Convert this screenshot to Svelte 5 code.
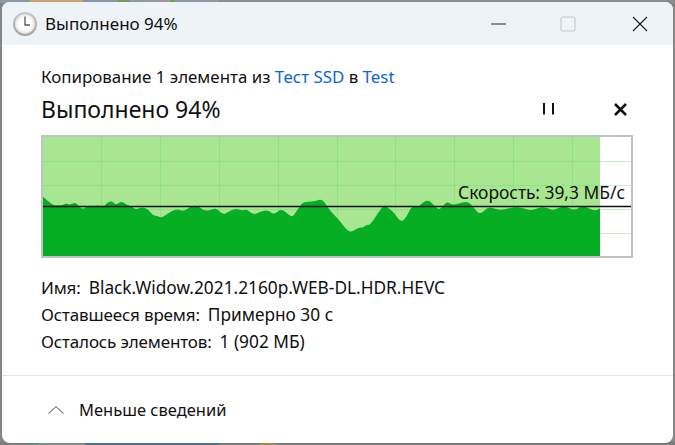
<script>
	// page coordinates read off the screenshot, shifted into the plot below
	const raw = [
		[43,196.7],[46.7,200],[50,202.3],[53,205],[58,205.3],[63.3,205],[66,203],[69.3,205],[75,202.3],[79.3,206],[82.7,209.3],[86.7,206.7],[90,205.3],[93.3,206.7],[98,205],[103,207.3],[106,204],[110,201],[113,202],[116,205],[121.7,201],[126.7,205],[130,205.3],[136.7,210],[141.7,206.7],[148.3,209.3],[152.7,215.3],[158.3,216],[161,218],[166.7,214.3],[176.7,208.3],[183.3,211.7],[190,206.7],[196.7,205.3],[205,211.3],[213.3,209],[216.7,208.3],[223.3,215],[230,210.7],[236.7,208.3],[241.7,210.7],[246.7,209.3],[254,215],[260,211.7],[268.3,210],[274,215],[281.7,208],[291.7,218],[296,212],[301.7,203.3],[305,202],[311.7,201.7],[316,201],[320.7,199],[325,202.7],[330,210.7],[340,220.7],[345,228.3],[351,232.7],[358.3,227.3],[363.3,227.7],[366,225],[370,225],[376.7,215],[384,204.3],[388,208],[393.3,211.7],[401,222.7],[406.7,216.7],[411.7,205.7],[418.3,207.3],[423,202],[428.3,200],[433,204],[439.3,211],[446.7,201],[451.7,205],[458.3,203.7],[468.3,201],[474,208],[480,215],[488.3,206.7],[495,209],[501.7,210],[510,208],[520,206.7],[530,211],[538,208],[545,206.7],[553.3,211],[563.3,205],[575,211],[581.7,205],[588,208],[595,211],[600,208.3]
	];
	const originX = 43;
	const originY = 137;
	const plotW = 588;
	const plotH = 119;
	const doneX = 600 - originX;

	const pts = raw.map(([x, y]) => [x - originX, y - originY]);

	// curve through the midpoints so the peaks come out soft
	function smooth(points) {
		let d = `M0,${plotH}L${points[0][0]},${points[0][1]}`;
		for (let i = 1; i < points.length - 1; i++) {
			const [x, y] = points[i];
			const mx = (x + points[i + 1][0]) / 2;
			const my = (y + points[i + 1][1]) / 2;
			d += `Q${x},${y} ${mx.toFixed(1)},${my.toFixed(1)}`;
		}
		const last = points[points.length - 1];
		return d + `L${last[0]},${last[1]}L${doneX},${plotH}Z`;
	}

	const area = smooth(pts);

	const columns = [101.5, 160.5, 219.5, 278.5, 337.5, 395.5, 454.5, 513.5, 572.5].map((x) => x - originX);
	const rows = [161.5, 185.5, 209.5, 233.5].map((y) => y - originY);
	const speedY = 206.5 - originY;

	const details = [
		{ label: 'Имя:', value: 'Black.Widow.2021.2160p.WEB-DL.HDR.HEVC' },
		{ label: 'Оставшееся время:', value: 'Примерно 30 с' },
		{ label: 'Осталось элементов:', value: '1 (902 МБ)' }
	];
</script>

<div class="desktop">
	<div class="window">
		<header class="titlebar">
			<svg class="clock" width="26" height="26" viewBox="0 0 26 26">
				<defs>
					<linearGradient id="rim" x1="0" y1="0" x2="0" y2="1">
						<stop offset="0" stop-color="#c9c9c9" />
						<stop offset="1" stop-color="#a2a2a2" />
					</linearGradient>
					<radialGradient id="face">
						<stop offset="0.6" stop-color="#ffffff" />
						<stop offset="1" stop-color="#e4e4e4" />
					</radialGradient>
				</defs>
				<circle cx="13" cy="13" r="12" fill="url(#rim)" />
				<circle cx="13" cy="13" r="10" fill="url(#face)" />
				<path d="M13 5.5V14H18" fill="none" stroke="#555" stroke-width="1.3" />
			</svg>
			<span class="title">Выполнено 94%</span>
			<div class="controls">
				<svg class="min" width="16" height="2" viewBox="0 0 16 2"><path d="M0 1H15" stroke="#222" stroke-width="1" /></svg>
				<svg class="max" width="16" height="16" viewBox="0 0 16 16"><rect x="1" y="1" width="14" height="14" rx="2" fill="none" stroke="#c8cbce" stroke-width="1.2" /></svg>
				<svg class="close" width="16" height="16" viewBox="0 0 16 16"><path d="M1 1L15 15M15 1L1 15" stroke="#222" stroke-width="1.2" /></svg>
			</div>
		</header>

		<main class="body">
			<p class="copying">Копирование 1 элемента из <a href="#src">Тест SSD</a> в <a href="#dst">Test</a></p>
			<div class="status">
				<h1>Выполнено 94%</h1>
				<div class="actions">
					<svg width="11" height="12" viewBox="0 0 11 12"><path d="M1 0V11.500M10 0V11.500" stroke="#111" stroke-width="2" /></svg>
					<svg width="13" height="13" viewBox="0 0 13 13"><path d="M1 1L12 12M12 1L1 12" stroke="#111" stroke-width="2.500" /></svg>
				</div>
			</div>

			<div class="chart">
				<svg width={plotW} height={plotH} viewBox="0 0 {plotW} {plotH}">
					{#each rows as y}
						<line x1="0" x2={plotW} y1={y} y2={y} stroke="#cdeecd" />
					{/each}
					<rect width={doneX} height={plotH} fill="#a9e692" />
					{#each rows as y}
						<line x1="0" x2={doneX} y1={y} y2={y} stroke="#90e084" />
					{/each}
					{#each columns as x}
						<line x1={x} x2={x} y1="0" y2={plotH} stroke="#90e084" />
					{/each}
					<path d={area} fill="#06ae26" />
					<line x1="0" x2={plotW} y1={speedY} y2={speedY} stroke="#111" stroke-width="1.300" />
				</svg>
				<span class="speed">Скорость: 39,3 МБ/с</span>
			</div>

			<dl class="details">
				{#each details as d}
					<div class="row">
						<dt>{d.label}</dt>
						<dd>{d.value}</dd>
					</div>
				{/each}
			</dl>
		</main>

		<footer class="footer">
			<svg width="16" height="8" viewBox="0 0 16 8"><path d="M0.500 7.500L8 0.700L15.500 7.500" fill="none" stroke="#7f7f7f" stroke-width="1.100" /></svg>
			<span>Меньше сведений</span>
		</footer>
	</div>
</div>

<style>
	:global(body) {
		margin: 0;
		background: #858585;
	}

	.desktop {
		width: 675px;
		height: 445px;
		box-sizing: border-box;
		padding: 2px 2px 2px 2px;
		background:
			linear-gradient(90deg, #8d9aa6 0 30px, #c4a56e 30px 83px, #8a97a3 83px 117px, #6f9f60 117px 130px, #8d9aa6 130px 143px, #999 143px 170px, #6f9f60 170px 175px, #8d9aa6 175px 219px, #8c8c8c 219px) top / 100% 3px no-repeat,
			linear-gradient(90deg, #7d7d7d 0 28px, #5f8f78 28px 38px, #808d8c 38px 85px, #4f6f8a 85px 219px, #7a7a7a 219px 260px, #a08a50 260px 276px, #7a7a7a 276px) bottom / 100% 3px no-repeat,
			#858585;
		font-family: 'Noto Sans', 'Segoe UI', sans-serif;
		color: #111;
	}

	.window {
		height: 100%;
		display: flex;
		flex-direction: column;
		background: #fff;
		border-radius: 8px;
		overflow: hidden;
	}

	.titlebar {
		flex: 0 0 43px;
		display: flex;
		align-items: center;
		padding-left: 10px;
		background: #eef3f8;
	}

	.clock {
		margin-right: 7px;
	}

	.title {
		font-size: 17px;
	}

	.controls {
		margin-left: auto;
		display: flex;
		align-items: center;
		padding-right: 25px;
	}

	.controls .max {
		margin-left: 53px;
	}

	.controls .close {
		margin-left: 56px;
	}

	.body {
		flex: 1;
		padding: 0 0 0 39px;
	}

	.copying {
		margin: 22px 0 0;
		font-size: 16.9px;
		line-height: 20px;
	}

	.copying a {
		color: #0a66cf;
		text-decoration: none;
	}

	.status {
		display: flex;
		align-items: center;
		justify-content: space-between;
		height: 32px;
		margin-top: 6px;
		padding-right: 46px;
	}

	h1 {
		margin: 0;
		font-size: 23px;
		font-weight: 400;
	}

	.actions {
		display: flex;
		align-items: center;
		gap: 60px;
	}

	.chart {
		position: relative;
		width: 588px;
		height: 119px;
		margin-top: 10px;
		border: 2px solid #c2c2c2;
		background: #fff;
	}

	.chart svg {
		display: block;
	}

	.speed {
		position: absolute;
		right: 6px;
		top: 45px;
		font-size: 17.4px;
		line-height: 20px;
		white-space: nowrap;
	}

	.details {
		margin: 16px 0 0;
		font-size: 17.3px;
		line-height: 27px;
	}

	.row {
		display: flex;
		gap: 8px;
	}

	dt,
	dd {
		margin: 0;
	}

	dt {
		font-size: 17px;
		letter-spacing: -0.15px;
	}

	.footer {
		flex: 0 0 68px;
		box-sizing: border-box;
		display: flex;
		align-items: center;
		gap: 15px;
		padding-left: 46px;
		border-top: 1px solid #e2e2e2;
		font-size: 16.5px;
	}
</style>
